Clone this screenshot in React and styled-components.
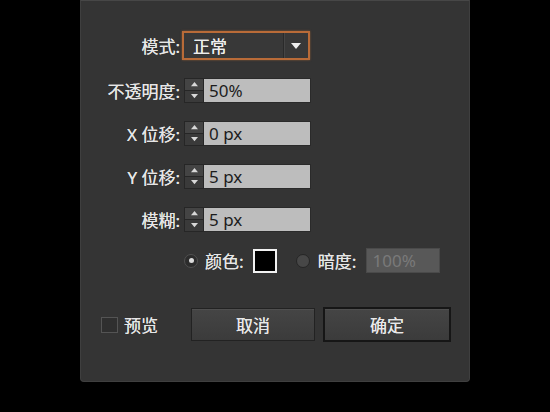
import React from "react";
import styled, { createGlobalStyle } from "styled-components";

const Global = createGlobalStyle`
  html, body { margin: 0; padding: 0; background: #000; }
  body { font-family: "Noto Sans", "Noto Sans CJK SC", sans-serif; }
`;

const Stage = styled.div`
  width: 550px;
  height: 412px;
  background: #000;
  overflow: hidden;
`;

const Panel = styled.div`
  box-sizing: border-box;
  margin-left: 80px;
  width: 390px;
  height: 382px;
  background: #343434;
  border: 1px solid #3f3f3f;
  border-top: 1px solid #474747;
  border-radius: 0 0 4px 4px;
  padding-top: 30px;
  display: flex;
  flex-direction: column;
`;

const Form = styled.div`
  display: flex;
  flex-direction: column;
  gap: 18px;
`;

const Row = styled.div`
  display: flex;
  align-items: center;
  height: ${(p) => p.$h || 25}px;
  margin-top: ${(p) => p.$mt || 0}px;
`;

const Label = styled.div`
  box-sizing: border-box;
  width: ${(p) => p.$w || 101}px;
  text-align: right;
  padding-right: 2px;
  color: #e6e6e6;
  font-size: 17px;
  font-family: "Noto Sans", "Noto Sans CJK SC", sans-serif;
  white-space: nowrap;
  text-shadow: 0 0 0.4px #e6e6e6;
`;

const Dropdown = styled.div`
  box-sizing: border-box;
  width: 128px;
  height: 29px;
  border: 2px solid #b96b38;
  box-shadow: 0 0 2px rgba(190, 110, 50, 0.6);
  background: #383838;
  display: flex;
  align-items: center;
`;

const DropText = styled.div`
  flex: 1;
  padding-left: 9px;
  color: #ededed;
  font-size: 17px;
  font-family: "Noto Sans CJK SC", sans-serif;
  text-shadow: 0 0 0.4px #ededed;
`;

const DropArrowBox = styled.div`
  width: 24px;
  height: 100%;
  border-left: 1px solid #2a2a2a;
  box-shadow: inset 1px 0 0 #454545;
  display: flex;
  align-items: center;
  justify-content: center;
`;

const Spinner = styled.div`
  box-sizing: border-box;
  margin-left: 2px;
  width: 20px;
  height: 25px;
  display: flex;
  flex-direction: column;
  border: 1px solid #262626;
  background: #2c2c2c;
`;

const SpinHalf = styled.div`
  flex: 1;
  display: flex;
  align-items: center;
  justify-content: center;
  background: ${(p) => (p.$down ? "#3a3a3a" : "#444")};
  border-top: ${(p) => (p.$down ? "1px solid #262626" : "none")};
`;

const Field = styled.div`
  box-sizing: border-box;
  width: ${(p) => p.$w || 107}px;
  height: 25px;
  margin-left: ${(p) => p.$ml || 0}px;
  background: ${(p) => (p.$disabled ? "#585858" : "#bdbdbd")};
  border: 1px solid ${(p) => (p.$disabled ? "#4a4a4a" : "#2a2a2a")};
  border-left: ${(p) => (p.$disabled ? "1px solid #4a4a4a" : "none")};
  color: ${(p) => (p.$disabled ? "#7a7a7a" : "#1c1c1c")};
  font-size: 17px;
  font-family: "Noto Sans", sans-serif;
  padding-left: 5px;
  display: flex;
  align-items: center;
  line-height: 1;
`;

const Radio = styled.div`
  box-sizing: border-box;
  width: 14px;
  height: 14px;
  border-radius: 50%;
  background: ${(p) => (p.$on ? "#2c2c2c" : "#474747")};
  border: 1px solid ${(p) => (p.$on ? "#505050" : "#262626")};
  display: flex;
  align-items: center;
  justify-content: center;
  margin-left: ${(p) => p.$ml || 0}px;
  &::after {
    content: "";
    display: ${(p) => (p.$on ? "block" : "none")};
    width: 5px;
    height: 5px;
    border-radius: 50%;
    background: #dcdcdc;
  }
`;

const InlineLabel = styled.div`
  color: #e6e6e6;
  font-size: 17px;
  font-family: "Noto Sans CJK SC", sans-serif;
  margin-left: ${(p) => p.$ml || 0}px;
  white-space: nowrap;
  text-shadow: 0 0 0.4px #e6e6e6;
`;

const Swatch = styled.div`
  box-sizing: border-box;
  width: 24px;
  height: 24px;
  background: #000;
  border: 2px solid #f2f2f2;
  margin-left: ${(p) => p.$ml || 0}px;
`;

const BottomRow = styled.div`
  display: flex;
  align-items: center;
  padding-left: 20px;
  margin-top: 34px;
  height: 35px;
`;

const Check = styled.div`
  box-sizing: border-box;
  width: 17px;
  height: 16px;
  background: #2f2f2f;
  border: 1px solid #545454;
`;

const Button = styled.div`
  box-sizing: border-box;
  width: ${(p) => p.$w}px;
  height: ${(p) => (p.$primary ? 35 : 33)}px;
  margin-left: ${(p) => p.$ml || 0}px;
  background: linear-gradient(#454545, #3b3b3b);
  border: ${(p) => (p.$primary ? "2px solid #161616" : "1px solid #222")};
  box-shadow: inset 0 1px 0 #4f4f4f;
  color: #e8e8e8;
  font-size: 17px;
  font-family: "Noto Sans CJK SC", sans-serif;
  text-shadow: 0 0 0.4px #e8e8e8;
  display: flex;
  align-items: center;
  justify-content: center;
`;

const Tri = ({ up, size = 8, color = "#d8d8d8" }) => (
  <svg width={size} height={size * 0.6} viewBox="0 0 10 6">
    <path d={up ? "M0 6 L5 0 L10 6 Z" : "M0 0 L10 0 L5 6 Z"} fill={color} />
  </svg>
);

const SpinField = ({ label, value }) => (
  <Row>
    <Label>{label}</Label>
    <Spinner>
      <SpinHalf>
        <Tri up size={7} />
      </SpinHalf>
      <SpinHalf $down>
        <Tri size={7} />
      </SpinHalf>
    </Spinner>
    <Field>{value}</Field>
  </Row>
);

export default function App() {
  return (
    <Stage>
      <Global />
      <Panel>
        <Form>
          <Row $h={29}>
            <Label>模式:</Label>
            <Dropdown>
              <DropText>正常</DropText>
              <DropArrowBox>
                <Tri size={10} color="#eeeeee" />
              </DropArrowBox>
            </Dropdown>
          </Row>
          <SpinField label="不透明度:" value="50%" />
          <SpinField label="X 位移:" value="0 px" />
          <SpinField label="Y 位移:" value="5 px" />
          <SpinField label="模糊:" value="5 px" />
          <Row $mt={-2}>
            <Radio $on $ml={103} />
            <InlineLabel $ml={7}>颜色:</InlineLabel>
            <Swatch $ml={9} />
            <Radio $ml={19} />
            <InlineLabel $ml={8}>暗度:</InlineLabel>
            <Field $disabled $w={74} $ml={10}>
              100%
            </Field>
          </Row>
        </Form>
        <BottomRow>
          <Check />
          <InlineLabel $ml={6}>预览</InlineLabel>
          <Button $w={124} $ml={33}>
            取消
          </Button>
          <Button $primary $w={128} $ml={8}>
            确定
          </Button>
        </BottomRow>
      </Panel>
    </Stage>
  );
}
